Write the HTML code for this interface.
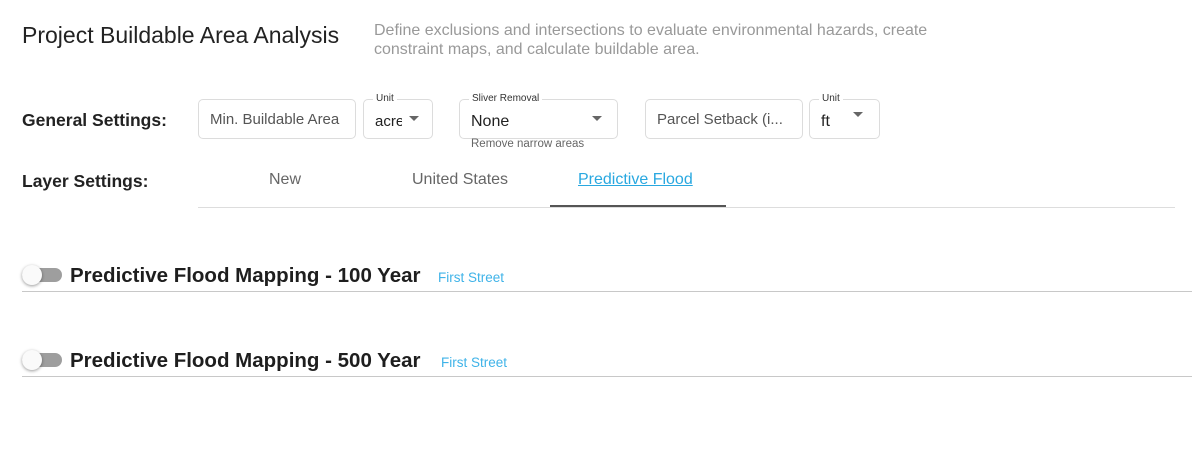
<!DOCTYPE html>
<html><head><style>
body{margin:0;width:1200px;height:453px;background:#fff;font-family:"Liberation Sans",sans-serif;position:relative;overflow:hidden;color:#222}
.a{position:absolute;white-space:nowrap}
.box{position:absolute;border:1px solid #dcdcdc;border-radius:5px;box-sizing:border-box;height:40px;top:99px}
.lbl{position:absolute;top:-7px;left:9px;background:#fff;padding:0 3px;font-size:10px;color:#333}
.val{position:absolute;left:11px;top:11px;font-size:15px}
.ph{color:#555}
.tri{position:absolute;width:0;height:0;border-left:5px solid transparent;border-right:5px solid transparent;border-top:5px solid #666}
.tog{position:absolute;width:40px;height:14px;border-radius:7px;background:#9e9e9e;left:22px}
.knob{position:absolute;left:0;top:-3px;width:20px;height:20px;border-radius:50%;background:#fafafa;box-shadow:0 1px 3px rgba(0,0,0,.4)}
.h{font-size:20.5px;font-weight:bold;color:#1e1e1e}
.fs{font-size:13.5px;color:#3fb3e8}
.line{position:absolute;left:22px;width:1170px;height:1px;background:#c8c8c8}
</style></head><body>
<div class="a" style="left:22px;top:22px;font-size:23px;color:#222">Project Buildable Area Analysis</div>
<div class="a" style="left:374px;top:21px;font-size:16px;line-height:19px;color:#999">Define exclusions and intersections to evaluate environmental hazards, create<br>constraint maps, and calculate buildable area.</div>

<div class="a" style="left:22px;top:110px;font-size:17.5px;font-weight:bold;color:#222">General Settings:</div>
<div class="box" style="left:198px;width:158px"><div class="val ph">Min. Buildable Area</div></div>
<div class="box" style="left:363px;width:70px"><div class="lbl">Unit</div><div class="val" style="top:13px;width:27px;overflow:hidden">acre</div><div class="tri" style="left:45px;top:16px"></div></div>
<div class="box" style="left:459px;width:159px"><div class="lbl">Sliver Removal</div><div class="val" style="top:13px;font-size:16px">None</div><div class="tri" style="left:132px;top:16px"></div></div>
<div class="a" style="left:471px;top:138px;font-size:11.5px;color:#666">Remove narrow areas</div>
<div class="box" style="left:645px;width:158px"><div class="val ph">Parcel Setback (i...</div></div>
<div class="box" style="left:809px;width:71px"><div class="lbl">Unit</div><div class="val" style="top:13px;font-size:16px">ft</div><div class="tri" style="left:43px;top:12px"></div></div>

<div class="a" style="left:22px;top:171px;font-size:17.5px;font-weight:bold;color:#222">Layer Settings:</div>
<div class="a" style="left:269px;top:171px;font-size:16px;color:#666">New</div>
<div class="a" style="left:412px;top:171px;font-size:16px;color:#666">United States</div>
<div class="a" style="left:578px;top:171px;font-size:16px;color:#29a8e0;text-decoration:underline">Predictive Flood</div>
<div class="a" style="left:198px;top:207px;width:977px;height:1px;background:#ddd"></div>
<div class="a" style="left:550px;top:205px;width:176px;height:2px;background:#555"></div>

<div class="tog" style="top:268px"><div class="knob"></div></div>
<div class="a h" style="left:70px;top:264px">Predictive Flood Mapping - 100 Year</div>
<div class="a fs" style="left:438px;top:270px">First Street</div>
<div class="line" style="top:291px"></div>

<div class="tog" style="top:353px"><div class="knob"></div></div>
<div class="a h" style="left:70px;top:349px">Predictive Flood Mapping - 500 Year</div>
<div class="a fs" style="left:441px;top:355px">First Street</div>
<div class="line" style="top:376px"></div>
</body></html>
